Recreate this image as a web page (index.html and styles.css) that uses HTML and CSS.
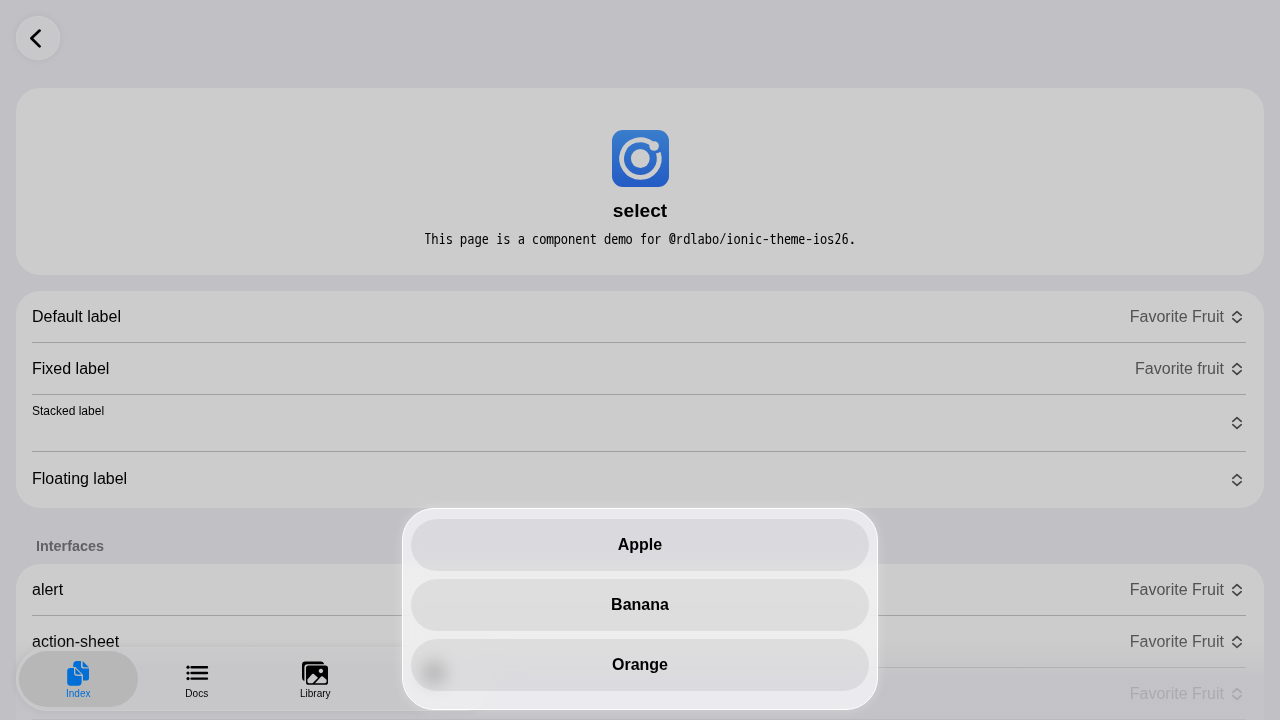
FILE: index.html
```html
<!DOCTYPE html>
<html lang="en">
<head>
<meta charset="utf-8">
<title>select</title>
<link rel="stylesheet" href="styles.css">
</head>
<body>
<svg class="defs" width="0" height="0" aria-hidden="true">
  <symbol id="expand" viewBox="0 0 512 512"><path d="M136 208l120-104 120 104M136 304l120 104 120-104" fill="none" stroke="currentColor" stroke-width="48" stroke-linecap="round" stroke-linejoin="round"/></symbol>
</svg>
<header class="toolbar">
  <button class="back" aria-label="Back"><svg viewBox="0 0 44 44"><path d="M23.6 14.6L15.4 22.3L23.6 30.4" fill="none" stroke="#000" stroke-width="2.7" stroke-linecap="round" stroke-linejoin="round"/></svg></button>
</header>
<main class="content">
  <section class="card hero">
    <svg class="logo" viewBox="0 0 57 57">
      <defs><linearGradient id="blue" x1="0" y1="0" x2="0" y2="1"><stop offset="0" stop-color="#397dcb"/><stop offset="1" stop-color="#235bc4"/></linearGradient></defs>
      <rect width="57" height="57" rx="11" fill="url(#blue)"/>
      <circle cx="28.3" cy="28.5" r="9.4" fill="#ccc"/>
      <path d="M40 13.8A18.8 18.8 0 1 0 46.3 22.8" fill="none" stroke="#ccc" stroke-width="4.8"/>
      <circle cx="42.1" cy="16" r="4.8" fill="#ccc"/>
    </svg>
    <h1>select</h1>
    <p>This page is a component demo for @rdlabo/ionic-theme-ios26.</p>
  </section>
  <section class="card list">
    <div class="row"><span>Default label</span><span class="value">Favorite Fruit</span><svg class="chev"><use href="#expand"/></svg></div>
    <div class="row"><span>Fixed label</span><span class="value">Favorite fruit</span><svg class="chev"><use href="#expand"/></svg></div>
    <div class="row stacked"><span class="small">Stacked label</span><svg class="chev"><use href="#expand"/></svg></div>
    <div class="row floating"><span>Floating label</span><svg class="chev"><use href="#expand"/></svg></div>
  </section>
  <h2>Interfaces</h2>
  <section class="card list last">
    <div class="row"><span>alert</span><span class="value">Favorite Fruit</span><svg class="chev"><use href="#expand"/></svg></div>
    <div class="row"><span>action-sheet</span><span class="value">Favorite Fruit</span><svg class="chev"><use href="#expand"/></svg></div>
    <div class="row"><span class="value">Favorite Fruit</span><svg class="chev"><use href="#expand"/></svg></div>
  </section>
</main>
<div class="fade"></div>
<nav class="tabs">
  <a class="tab active">
    <svg viewBox="0 0 26 26"><path d="M7.2 5.2Q7.2 1 11 1H15V6.8Q15 8.6 17 8.6H23V18Q23 20.5 20.5 20.5H17V14.8L9.4 7H7.2Z"/><path d="M16.6 1L22.8 7.2H18Q16.6 7.2 16.6 5.8Z"/><path d="M4.5 8H8V13Q8 16 11 16H15.6V22.3Q15.6 25.7 12.3 25.7H4.3Q1.2 25.7 1.2 22.6V11Q1.2 8 4.5 8Z"/><path d="M9.3 8.6L15.4 14.6H11Q9.3 14.6 9.3 12.8Z"/></svg>
    <span>Index</span>
  </a>
  <a class="tab">
    <svg viewBox="0 0 26 26"><path d="M7.5 7.2H23M7.5 13H23M7.5 18.6H23" stroke="#000" stroke-width="2.4" stroke-linecap="round"/><circle cx="4" cy="7.2" r="1.6"/><circle cx="4" cy="13" r="1.6"/><circle cx="4" cy="18.6" r="1.6"/></svg>
    <span>Docs</span>
  </a>
  <a class="tab">
    <svg viewBox="0 0 26 26"><path d="M22.2 4.2Q21.5 1.6 19.2 1.6H3.4Q0 1.6 0 5V17.6Q0 20.4 2.4 21V7.2Q2.4 4.2 5.4 4.2Z"/><path fill-rule="evenodd" d="M6.6 5.4H23.4Q26 5.4 26 8V22.2Q26 24.8 23.4 24.8H6.6Q4 24.8 4 22.2V8Q4 5.4 6.6 5.4ZM18.9 8.8a2.2 2.2 0 1 0 .01 0ZM5.4 19.4V21.6Q5.4 23.3 7 23.3H10.6L16 17.7L11.8 14Q11 13.3 10.2 14ZM13 23.3H22.8Q24.6 23.3 24.6 21.6V19.8L20.8 16.6Q20 15.9 19.2 16.6Z"/></svg>
    <span>Library</span>
  </a>
  <a class="tab" aria-label="Settings"><svg viewBox="0 0 26 26"><circle cx="13" cy="13" r="8" fill="none" stroke="#000" stroke-width="5.4"/></svg></a>
</nav>
<div class="sheet" role="dialog">
  <button>Apple</button>
  <button>Banana</button>
  <button>Orange</button>
</div>
</body>
</html>
```
FILE: styles.css
```css
* { box-sizing: border-box; }
body {
  margin: 0;
  height: 720px;
  overflow: hidden;
  position: relative;
  background: #c1c0c5;
  color: #000;
  font-family: "Liberation Sans", Arial, sans-serif;
  font-size: 16px;
}
.defs { position: absolute; }
button { border: 0; padding: 0; font: inherit; color: inherit; }
.toolbar { height: 88px; padding: 16px; }
.back {
  display: block;
  width: 44px;
  height: 44px;
  border-radius: 50%;
  background: #c8c8ca;
  box-shadow: 0 0 8px rgba(0, 0, 0, .06), inset 0 0 0 1px #cccccd;
}
.back svg { display: block; width: 44px; height: 44px; }
.content { padding: 0 16px; }
.card { background: #ccc; border-radius: 24px; overflow: hidden; }
.hero {
  height: 187px;
  padding-top: 42px;
  display: flex;
  flex-direction: column;
  align-items: center;
  margin-bottom: 16px;
}
.logo { width: 57px; height: 57px; }
h1 { margin: 12px 0 0; font-size: 19.2px; line-height: 24px; }
.hero p {
  margin: 6px 0 0;
  font: 14.4px/21px "WenQuanYi Zen Hei Mono", "Noto Sans Mono CJK JP", monospace;
  white-space: nowrap;
}
.list { padding: 0 18px 0 16px; }
.last { border-radius: 24px 24px 0 0; }
.row {
  display: flex;
  align-items: center;
  height: 52px;
  border-bottom: 1px solid #a0a0a2;
}
.value { margin-left: auto; color: #525252; }
.chev { width: 18px; height: 18px; margin: 1px 0 0 4px; color: #444; flex: none; }
.stacked { height: 57px; }
.stacked .chev, .floating .chev { margin: -1px 0 0 auto; }
.small { font-size: 12px; align-self: flex-start; margin-top: 9px; }
.floating { height: 56px; border: 0; }
.floating span { margin-top: -2px; }
h2 {
  margin: 0;
  height: 56px;
  padding: 29px 20px 0;
  font-size: 14.4px;
  line-height: 18px;
  color: #626166;
}
.fade {
  position: absolute;
  inset: 640px 0 0;
  background: linear-gradient(rgba(193, 192, 197, 0), rgba(193, 192, 197, .8) 42px);
}
.tabs {
  position: absolute;
  left: 16px;
  top: 647px;
  width: 480px;
  height: 64px;
  padding: 3px 2px;
  border: 1px solid #cdcdce;
  border-radius: 32px;
  display: flex;
  background: rgba(202, 202, 204, .6);
  backdrop-filter: blur(3px);
  box-shadow: 0 0 9px rgba(0, 0, 0, .07);
}
.tab {
  width: 118.5px;
  height: 56px;
  flex: none;
  padding-top: 9px;
  display: flex;
  flex-direction: column;
  align-items: center;
  border-radius: 28px;
  font-size: 10px;
  line-height: 12px;
}
.tab svg { width: 26px; height: 26px; margin-bottom: 2px; overflow: visible; }
.active { background: #b7b7b8; color: #006fd6; fill: currentColor; }
.active svg { margin-left: .5px; margin-top: -.5px; margin-bottom: 2.5px; }
.sheet {
  position: absolute;
  left: 402px;
  top: 508px;
  width: 476px;
  height: 202px;
  padding: 10px 8px;
  border: 1px solid #fff;
  border-radius: 32px;
  display: flex;
  flex-direction: column;
  gap: 8px;
  background: rgba(255, 255, 255, .66);
  backdrop-filter: blur(8px) saturate(2.6);
  box-shadow: 0 0 12px rgba(255, 255, 255, .28);
}
.sheet button {
  height: 52px;
  border-radius: 26px;
  background: rgba(0, 0, 0, .067);
  font-weight: 700;
}
```
